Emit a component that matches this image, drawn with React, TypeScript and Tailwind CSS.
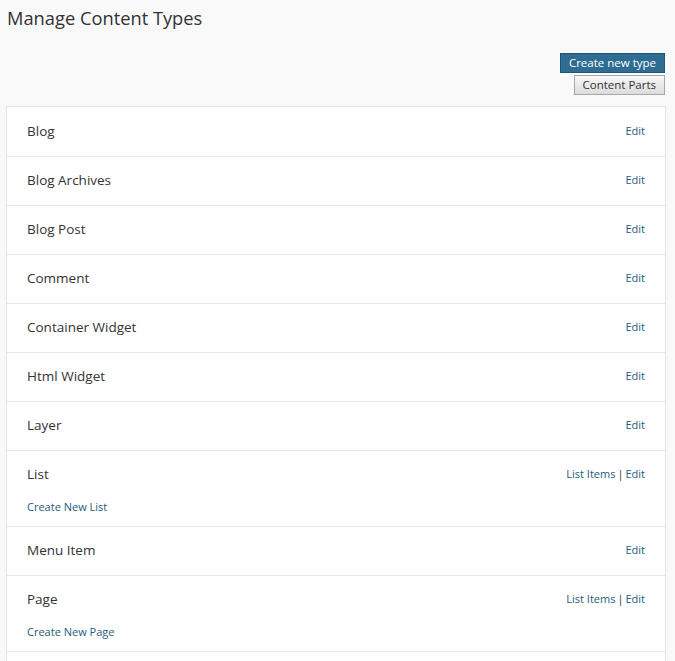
const rows: { name: string; items?: boolean; create?: string }[] = [
  { name: "Blog" },
  { name: "Blog Archives" },
  { name: "Blog Post" },
  { name: "Comment" },
  { name: "Container Widget" },
  { name: "Html Widget" },
  { name: "Layer" },
  { name: "List", items: true, create: "Create New List" },
  { name: "Menu Item" },
  { name: "Page", items: true, create: "Create New Page" },
];

function Row({ name, items, create }: { name: string; items?: boolean; create?: string }) {
  return (
    <div className="border-t border-[#eaeaea] bg-white px-5 pt-[14px] pb-[16px] first:border-t-0 first:pt-[15px]">
      <div className="flex items-center justify-between leading-[18px]">
        <span className="text-[13.5px] text-[#333]">{name}</span>
        <span className="text-[11px] text-[#1e5b7e]">
          {items && (
            <>
              <a className="cursor-pointer">List Items</a>
              <span className="px-[2px] text-[#333]">|</span>
            </>
          )}
          <a className="cursor-pointer">Edit</a>
        </span>
      </div>
      {create && (
        <div className="mt-[15px] -mb-[6px] text-[11px] leading-[18px] text-[#1e5b7e]">
          <a className="cursor-pointer">{create}</a>
        </div>
      )}
    </div>
  );
}

export default function App() {
  return (
    <div className="h-[661px] overflow-hidden bg-[#f9f9f9] font-['Open_Sans',sans-serif] text-[#333]">
      <div className="px-[6px] pt-[5px]">
        <h1 className="pl-px text-[18.3px] leading-[26px] text-[#333]">Manage Content Types</h1>
        <div className="mt-[22px] flex flex-col items-end pr-[4px]">
          <button className="h-[20px] border border-[#1f5474] bg-[#2f6c91] px-[8px] text-[11.5px] leading-[18px] text-white">
            Create new type
          </button>
          <button className="mt-[2px] h-[20px] border border-[#a8a8a8] bg-gradient-to-b from-[#f7f7f7] to-[#dcdcdc] px-[8px] text-[11.5px] leading-[18px] text-[#333]">
            Content Parts
          </button>
        </div>
        <div className="mt-[11px] mr-[3px] border border-[#e6e6e6]">
          {rows.map((r) => (
            <Row key={r.name} {...r} />
          ))}
          {/* next row begins at the bottom edge of the frame */}
          <div className="h-[49px] border-t border-[#eaeaea] bg-white" />
        </div>
      </div>
    </div>
  );
}
